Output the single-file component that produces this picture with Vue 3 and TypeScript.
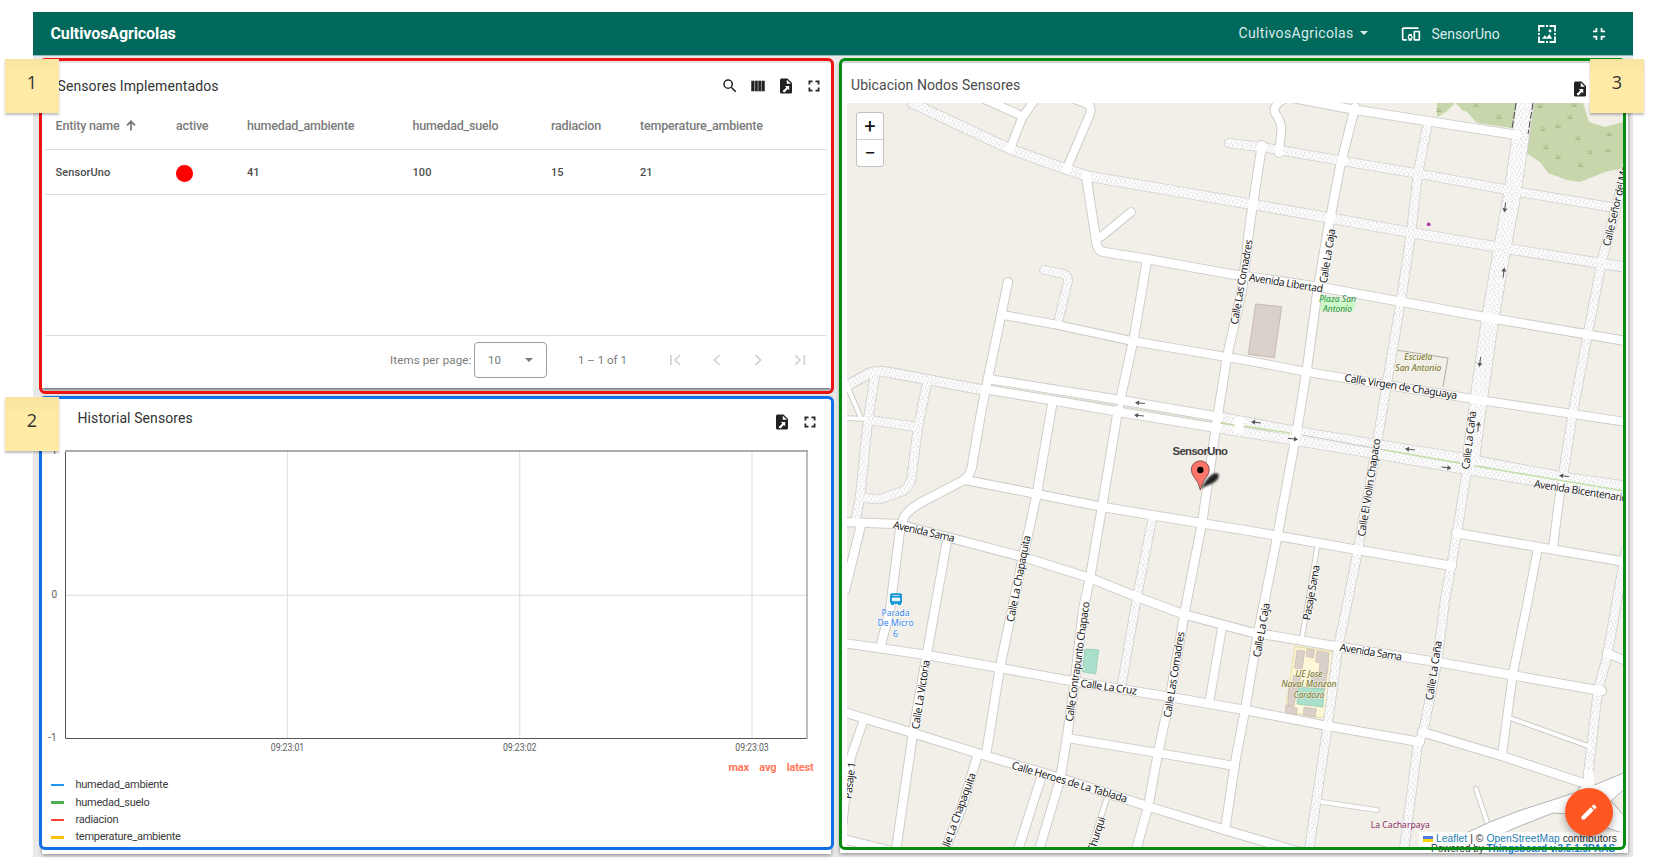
<script setup lang="ts">
interface Road { d: string; w: number; kind?: 'u' }
interface Street { t: string; x: number; y: number; a: number; len?: number; anchor?: string }
interface Place { t: string; x: number; y: number; len: number; kind: string }

const columns = ['Entity name', 'active', 'humedad_ambiente', 'humedad_suelo', 'radiacion', 'temperature_ambiente']
const row = ['SensorUno', '', '41', '100', '15', '21']
const legend = [
  { name: 'humedad_ambiente', color: '#2196f3' },
  { name: 'humedad_suelo', color: '#4caf50' },
  { name: 'radiacion', color: '#f44336' },
  { name: 'temperature_ambiente', color: '#ffc107' },
]
const ticks = [{ x: 287.5, t: '09:23:01' }, { x: 519.7, t: '09:23:02' }, { x: 752, t: '09:23:03' }]

const dirt: Road[] = [
  { d: 'M912 103L963 127L1010 149L1063 168L1087 176L1250 204L1330 218L1413 233L1503 248L1624 267', w: 10, kind: 'u' },
  { d: 'M1044 270L1060 273Q1069 275 1068 281L1058 323', w: 8.5, kind: 'u' },
  { d: 'M1229 143L1267 148L1343 161L1420 174L1520 192L1616 208', w: 9, kind: 'u' },
  { d: 'M1428 122L1418 173L1411 233L1401 300L1387 383L1377 443L1358 550L1348 600L1338 647L1328 723L1309 850', w: 9, kind: 'u' },
  { d: 'M1526 98L1513 190L1502 250L1490 320L1480 390L1470 465', w: 17, kind: 'u' },
  { d: 'M1467 470L1457 533L1445 600L1437 663L1423 733L1418 743L1404 850', w: 9, kind: 'u' },
  { d: 'M1626 172L1618 200L1602 260L1588 333L1572 417L1563 476', w: 9, kind: 'u' },
  { d: 'M1217 416L1230 419L1300 432L1380 445L1463 458L1563 477L1626 486', w: 9.5, kind: 'u' },
  { d: 'M1213 427L1230 430L1293 440L1377 454L1463 469L1626 496', w: 9.5, kind: 'u' },
  { d: 'M842 391L850 384L870 373Q878 371 887 372L983 390', w: 10, kind: 'u' },
  { d: 'M875 375L868 420L860 497L856 519', w: 9, kind: 'u' },
  { d: 'M927 383L918 427L911 480Q910 486 903 491L880 499L862 498', w: 9, kind: 'u' },
  { d: 'M869 420L917 427', w: 9, kind: 'u' },
  { d: 'M1152 520L1137 597L1122 683', w: 8.5, kind: 'u' },
  { d: 'M1626 550L1617 600L1607 657L1598 690L1588 775', w: 9, kind: 'u' },
]
const paved: Road[] = [
  { d: 'M982 98L1022 116', w: 8.5 },
  { d: 'M1036 98L1022 118L1010 149', w: 8.5 },
  { d: 'M1074 99L1088 104Q1092 107 1090 114L1066 170', w: 8.5 },
  { d: 'M1086 175L1096 240Q1097 251 1104 252L1147 259L1230 274L1320 287L1397 301L1490 318L1626 341', w: 9 },
  { d: 'M1098 238L1102 236L1131 212', w: 8.5 },
  { d: 'M1008 282L998 330L987 383L981 413L973 460Q972 474 964 480L922 502Q908 510 904 517L900 530L890 610L880 648', w: 9 },
  { d: 'M1003 315L1053 324L1132 341L1250 361L1307 372L1387 385L1473 399L1573 414L1626 422', w: 8.5 },
  { d: 'M1147 260L1134 337L1118 410L1102 507L1090 578L1083 610L1075 680L1067 737L1060 780L1039 850', w: 9 },
  { d: 'M1262 145L1250 223L1242 290L1227 357L1217 420L1202 523L1186 605L1170 697L1158 753L1148 807L1136 850', w: 9 },
  { d: 'M1355 107L1340 167L1328 230L1318 287L1307 368L1297 430L1277 538L1258 633L1245 710L1235 763L1225 830', w: 9 },
  { d: 'M1288 97L1279 102Q1273 108 1275 113Q1283 124 1281 133L1279 153', w: 8.5 },
  { d: 'M1288 97L1350 109L1427 121L1517 135', w: 9 },
  { d: 'M1563 480L1560 493L1553 547', w: 8.5 },
  { d: 'M1538 548L1527 605L1513 673L1502 755', w: 8.5 },
  { d: 'M988 379L1120 400L1219 417', w: 9 },
  { d: 'M984 389L1063 402L1120 412L1217 428', w: 9 },
  { d: 'M848 388L861 418', w: 4.5 },
  { d: 'M845 418L866 419', w: 4.5 },
  { d: 'M843 522L897 524L947 537L1023 557L1090 578L1137 597L1183 614L1250 632L1340 647L1437 662L1517 676L1602 691', w: 9 },
  { d: 'M861 525L845 590', w: 9 },
  { d: 'M947 541L935 608L920 693L913 733L896 850', w: 9 },
  { d: 'M1052 405L1037 493L1023 557L1012 610L1000 667L986 755', w: 9 },
  { d: 'M977 757L962 807L945 850', w: 9 },
  { d: 'M965 480L1037 494L1103 507L1200 523L1250 531L1358 550L1452 566', w: 9 },
  { d: 'M1456 533L1538 547L1626 562', w: 9 },
  { d: 'M1317 548L1302 638', w: 4.5 },
  { d: 'M1607 653L1626 661', w: 8.5 },
  { d: 'M1510 718L1588 746', w: 4.5 },
  { d: 'M843 643L927 655L1000 668L1077 682L1170 697L1245 710L1328 726L1420 742', w: 9 },
  { d: 'M1422 732L1502 756L1586 784', w: 9 },
  { d: 'M1222 628L1210 698', w: 8.5 },
  { d: 'M1067 738L1158 753L1235 766', w: 8.5 },
  { d: 'M843 712L913 733L980 754L1060 778L1150 807L1225 830L1303 853', w: 9 },
  { d: 'M863 722L851 757L846 790L842 830', w: 8.5 },
  { d: 'M843 839L895 852', w: 9 },
  { d: 'M1042 775L1018 850', w: 9 },
  { d: 'M1107 798L1090 850', w: 5 },
  { d: 'M1322 802L1377 810', w: 4.5 },
  { d: 'M1476 789L1488 825', w: 4.5 },
]
const streets: Street[] = [
  { t: 'Calle Las Comadres', x: 1241.5, y: 282, a: -80, len: 86 },
  { t: 'Calle La Caja', x: 1327.5, y: 256, a: -81, len: 55 },
  { t: 'Avenida Libertad', x: 1286, y: 283, a: 9, len: 75 },
  { t: 'Calle Virgen de Chaguaya', x: 1401, y: 386.5, a: 9, len: 114 },
  { t: 'Calle Señor del Mar', x: 1606.5, y: 246, a: -77, len: 86, anchor: 'start' },
  { t: 'Calle La Caña', x: 1469, y: 440, a: -83, len: 59 },
  { t: 'Calle El Violin Chapaco', x: 1369, y: 487.5, a: -81, len: 99 },
  { t: 'Avenida Bicentenario', x: 1534, y: 483.5, a: 9, len: 95, anchor: 'start' },
  { t: 'Calle La Chapaquita', x: 1018.5, y: 578.5, a: -79, len: 88 },
  { t: 'Avenida Sama', x: 924, y: 531.5, a: 12.5, len: 63 },
  { t: 'Calle Contrapunto Chapaco', x: 1077.5, y: 661.5, a: -82, len: 121 },
  { t: 'Calle La Victoria', x: 920.7, y: 694.5, a: -81, len: 70 },
  { t: 'Calle La Cruz', x: 1108.7, y: 687, a: 8, len: 57 },
  { t: 'Calle Las Comadres', x: 1174, y: 674.5, a: -81, len: 87 },
  { t: 'Calle Heroes de La Tablada', x: 1069.5, y: 782, a: 16.5, len: 120 },
  { t: 'Calle La Chapaquita', x: 972.5, y: 773, a: -70, len: 90, anchor: 'end' },
  { t: 'Calle Churqui', x: 1102, y: 817, a: -72, len: 60, anchor: 'end' },
  { t: 'Pasaje 1', x: 852, y: 762, a: -83, len: 37, anchor: 'end' },
  { t: 'Pasaje Sama', x: 1311.3, y: 592.5, a: -80, len: 56 },
  { t: 'Calle La Caja', x: 1261.5, y: 630, a: -80, len: 55 },
  { t: 'Avenida Sama', x: 1371, y: 652, a: 9, len: 63 },
  { t: 'Calle La Caña', x: 1433.7, y: 670.5, a: -81, len: 60 },
]
const places: Place[] = [
  { t: 'Plaza San', x: 1337.5, y: 301.7, len: 37, kind: 'park' },
  { t: 'Antonio', x: 1337.5, y: 312, len: 29, kind: 'park' },
  { t: 'Escuela', x: 1418.3, y: 360, len: 28, kind: 'school' },
  { t: 'San Antonio', x: 1418.3, y: 370.5, len: 46, kind: 'school' },
  { t: 'UE Jose', x: 1309, y: 676.7, len: 27, kind: 'school' },
  { t: 'Naval Monzon', x: 1309, y: 687.2, len: 55, kind: 'school' },
  { t: 'Cardozo', x: 1309, y: 697.7, len: 31, kind: 'school' },
  { t: 'La Cacharpaya', x: 1400.3, y: 828.3, len: 59, kind: 'venue' },
  { t: 'Parada', x: 895.6, y: 616, len: 28, kind: 'stop' },
  { t: 'De Micro', x: 895.6, y: 626.4, len: 36, kind: 'stop' },
  { t: '6', x: 895.6, y: 636.6, len: 5, kind: 'stop' },
]
const arrows = [
  { x: 1140, y: 403, a: 187 }, { x: 1139, y: 415.5, a: 187 }, { x: 1256, y: 422.3, a: 187 }, { x: 1293, y: 438.8, a: 7 },
  { x: 1410, y: 449.3, a: 187 }, { x: 1446.5, y: 467.7, a: 7 }, { x: 1564, y: 476, a: 187 }, { x: 1505, y: 207.5, a: 97 },
  { x: 1503.7, y: 272.5, a: -83 }, { x: 1480, y: 362, a: 97 }, { x: 1478.3, y: 426.5, a: -83 },
]
const tufts = [
  [1439, 110], [1476, 105], [1499, 117], [1540, 106], [1574, 105], [1570, 117], [1543, 129], [1558, 126],
  [1578, 138], [1609, 134], [1546, 147], [1558, 157], [1590, 152], [1608, 150], [1580.5, 165],
]
const notes = ['1', '2', '3']
</script>

<template>
  <div class="page">
    <header class="bar">
      <h1>CultivosAgricolas</h1>
      <div class="states">CultivosAgricolas<i class="caret"></i></div>
      <div class="entity">
        <svg class="dev" viewBox="0 0 24 24"><path fill="currentColor" d="M3 6h18V4H3c-1.1 0-2 .9-2 2v12c0 1.1.9 2 2 2h4v-2H3V6zm10 6H9v1.78c-.61.55-1 1.33-1 2.22s.39 1.67 1 2.22V20h4v-1.78c.61-.55 1-1.34 1-2.22s-.39-1.67-1-2.22V12zm-2 5.5c-.83 0-1.5-.67-1.5-1.5s.67-1.5 1.5-1.5 1.5.67 1.5 1.5-.67 1.5-1.5 1.5zM22 8h-6c-.5 0-1 .5-1 1v10c0 .5.5 1 1 1h6c.5 0 1-.5 1-1V9c0-.5-.5-1-1-1zm-1 10h-4v-8h4v8z" /></svg>
        <span>SensorUno</span>
      </div>
      <svg class="shot" viewBox="0 0 18 18"><path d="M1 6.500V1H6.500M11.500 1H17V6.500M17 11.500V17H11.500M6.500 17H1V11.500M1 8V10M17 8V10M8 1H10M8 17H10" fill="none" stroke="currentColor" stroke-width="1.8" /><path fill="currentColor" d="M4 13.800L6.800 10.200L8.700 12.500L11.300 9L14.200 13.800Z" /><circle cx="12" cy="6" r="1.400" fill="currentColor" /></svg>
      <svg class="exit" viewBox="5 5 14 14"><path fill="currentColor" d="M5 16h3v3h2v-5H5v2zm3-8H5v2h5V5H8v3zm6 11h2v-3h3v-2h-5v5zm2-11V5h-2v5h5V8h-3z" /></svg>
    </header>

    <main class="board">
      <div class="left">
        <section class="card entities">
          <div class="head">
            <h2>Sensores Implementados</h2>
            <svg class="ic" viewBox="0 0 24 24"><path d="M15.5 14h-.79l-.28-.27A6.47 6.47 0 0 0 16 9.5 6.5 6.5 0 1 0 9.5 16c1.61 0 3.09-.59 4.23-1.57l.27.28v.79l5 4.99L20.49 19l-4.99-5zm-6 0a4.5 4.5 0 1 1 0-9 4.5 4.5 0 0 1 0 9z" /></svg>
            <svg class="ic" viewBox="0 0 24 24"><path d="M3 5h4v14H3zM8.200 5h3.300v14H8.200zM12.600 5h3.300v14h-3.300zM17 5h4v14h-4z" /><path d="M6 5h12v14H6z" opacity=".4" /></svg>
            <svg class="ic" viewBox="0 0 24 24"><path fill-rule="evenodd" d="M6 2h8l6 6v12a2 2 0 0 1-2 2H6a2 2 0 0 1-2-2V4a2 2 0 0 1 2-2zm7 1.500V9h5.500zM10.500 12l1.900 1.900-3 3a1.800 1.800 0 1 0 2 2l3-3 1.900 1.900V12z" /></svg>
            <svg class="ic" viewBox="0 0 24 24"><path d="M7 14H4.700v5.300H10V17H7v-3zM4.700 10H7V7h3V4.700H4.700V10zM17 17h-3v2.300h5.300V14H17v3zM14 4.700V7h3v3h2.300V4.700H14z" /></svg>
          </div>
          <div class="tr th">
            <span v-for="(c, i) in columns" :key="c">{{ c }}<svg v-if="i === 0" class="up" viewBox="0 0 10 11"><path d="M5 10.500V1.500M1 5.300L5 1.300L9 5.300" fill="none" stroke="#757575" stroke-width="1.700" /></svg></span>
          </div>
          <div class="tr td">
            <span v-for="(c, i) in row" :key="i"><b v-if="i === 1" class="dot"></b>{{ c }}</span>
          </div>
          <div class="pager">
            <span class="ipp">Items per page:</span>
            <div class="select"><span>10</span><i class="caret"></i></div>
            <span class="range">1 – 1 of 1</span>
            <svg class="pg" viewBox="0 0 24 24"><path d="M18 6l-6 6 6 6M7 6v12" /></svg>
            <svg class="pg" viewBox="0 0 24 24"><path d="M15 6l-6 6 6 6" /></svg>
            <svg class="pg" viewBox="0 0 24 24"><path d="M9 6l6 6-6 6" /></svg>
            <svg class="pg" viewBox="0 0 24 24"><path d="M6 6l6 6-6 6M17 6v12" /></svg>
          </div>
        </section>

        <section class="card history">
          <div class="head">
            <h2>Historial Sensores</h2>
            <svg class="ic" viewBox="0 0 24 24"><path fill-rule="evenodd" d="M6 2h8l6 6v12a2 2 0 0 1-2 2H6a2 2 0 0 1-2-2V4a2 2 0 0 1 2-2zm7 1.500V9h5.500zM10.500 12l1.900 1.900-3 3a1.800 1.800 0 1 0 2 2l3-3 1.900 1.900V12z" /></svg>
            <svg class="ic" viewBox="0 0 24 24"><path d="M7 14H4.700v5.300H10V17H7v-3zM4.700 10H7V7h3V4.700H4.700V10zM17 17h-3v2.300h5.300V14H17v3zM14 4.700V7h3v3h2.300V4.700H14z" /></svg>
          </div>
          <svg class="chart" viewBox="42 440 789 320">
            <g stroke="#e3e3e3" stroke-width="1.200">
              <path v-for="k in ticks" :key="k.x" :d="`M${k.x} 451V738`" />
              <path d="M66 595.300H807" />
            </g>
            <path d="M65.500 451V738.500H807" fill="none" stroke="#545454" />
            <path d="M65 451H808" stroke="#adadad" stroke-width="2" />
            <path d="M807 451V739" stroke="#999" stroke-width="1.300" />
            <g class="axis">
              <text x="57.200" y="454" text-anchor="end">1</text>
              <text x="57.200" y="597.500" text-anchor="end">0</text>
              <text x="56.700" y="741" text-anchor="end">-1</text>
              <text v-for="k in ticks" :key="k.t" :x="k.x" y="750.800" text-anchor="middle" textLength="33.500" lengthAdjust="spacingAndGlyphs">{{ k.t }}</text>
            </g>
          </svg>
          <div class="stats"><span>max</span><span>avg</span><span>latest</span></div>
          <ul class="legend">
            <li v-for="l in legend" :key="l.name"><i :style="{ background: l.color }"></i>{{ l.name }}</li>
          </ul>
        </section>
      </div>

      <section class="card mapcard">
        <div class="head">
          <h2>Ubicacion Nodos Sensores</h2>
          <svg class="ic" viewBox="0 0 24 24"><path fill-rule="evenodd" d="M6 2h8l6 6v12a2 2 0 0 1-2 2H6a2 2 0 0 1-2-2V4a2 2 0 0 1 2-2zm7 1.500V9h5.500zM10.500 12l1.900 1.900-3 3a1.800 1.800 0 1 0 2 2l3-3 1.900 1.900V12z" /></svg>
        </div>
        <div class="map">
          <svg class="tiles" viewBox="847 103 776 744">
            <defs>
              <pattern id="gravel" width="9" height="7" patternUnits="userSpaceOnUse">
                <rect width="9" height="7" fill="#fbfbfb" />
                <path d="M1 1h1M4 0h1M7 2h1M2.500 3.500h1M5.500 4h1M0 5h1M8 6h1M4 6h1" stroke="#d2d2d2" stroke-width="1" />
              </pattern>
              <filter id="soft" x="-50%" y="-50%" width="200%" height="200%"><feGaussianBlur stdDeviation="1.100" /></filter>
            </defs>
            <rect x="847" y="103" width="776" height="744" fill="#f2efe9" />
            <g fill="#c8d7ab">
              <path d="M1437 103H1455L1446 112L1437 117Z" />
              <path d="M1456 103L1462 110L1467 112L1477 123L1512 128L1516 103Z" />
              <path d="M1533 103H1583L1589 122L1605 127L1623 122V168L1605 172L1580 182L1567 180L1548 173L1540 162L1526 153Z" />
            </g>
            <g stroke="#a9bd88" stroke-width="1" fill="none">
              <path v-for="(p, i) in tufts" :key="i" :d="`M${p[0] - 3} ${p[1] + 1.500}h6M${p[0]} ${p[1] + 1.500}v-4M${p[0] - 2.500} ${p[1] - 1.500}l2.500 3l2.500 -3`" />
            </g>
            <path d="M1255.700 304L1281.700 306.700L1274.300 357.700L1248.300 354.300Z" fill="#d9d0c9" stroke="#c8bab0" />
            <path d="M1322 296L1356 302L1354 311L1320 310Z" fill="#cdf7c9" />
            <path d="M1396 350L1448 358L1443 387" fill="none" stroke="#b3aca5" />
            <path d="M1085 649L1098.700 650L1095.700 674L1082.500 671.700Z" fill="#aae0cb" stroke="#92ccb4" stroke-width=".8" />
            <path d="M1295 646.500L1333.500 652L1326 710Q1325 718 1319 717.500L1285.500 711.500Z" fill="#fdf7d7" stroke="#e6dc9b" />
            <g fill="#d9d0c9" stroke="#c8bab0" stroke-width=".7">
              <path d="M1297 650L1305 651L1302 669L1294.500 668Z" /><path d="M1307 649L1314.500 650L1313.500 658L1306.500 656.500Z" />
              <path d="M1317 651L1329 653L1327.500 674L1319 673L1320 663L1315.500 662Z" />
              <path d="M1293.500 675L1301 676L1298 687L1292 686Z" /><path d="M1312 674L1327 675L1325 690L1310 686Z" />
              <path d="M1289 687L1297 688L1294 706L1288 705Z" /><path d="M1286 705L1297 708L1296.500 715L1285.500 712Z" />
              <path d="M1304 707L1316.500 709L1315 717L1303.500 715Z" />
            </g>
            <path d="M1298 687L1324 689L1323 707L1297 704Z" fill="#aae0cb" stroke="#92ccb4" stroke-width=".8" />
            <g fill="none" stroke-linecap="round" stroke-linejoin="round">
              <path v-for="(r, i) in dirt" :key="'a' + i" :d="r.d" :stroke-width="r.w + 1.200" stroke="#d4d2ce" />
              <path v-for="(r, i) in paved" :key="'b' + i" :d="r.d" :stroke-width="r.w + 1.200" stroke="#cbc9c5" />
              <path v-for="(r, i) in dirt" :key="'c' + i" :d="r.d" :stroke-width="r.w - .6" stroke="url(#gravel)" />
              <path v-for="(r, i) in paved" :key="'d' + i" :d="r.d" :stroke-width="r.w - .6" stroke="#fff" />
              <path d="M1516 103L1512 129M1533 103L1528 134" stroke="#444" stroke-dasharray="7 2" stroke-linecap="butt" />
              <path d="M992 385L1118 405M1126 408L1212 421" stroke="#cfccc6" stroke-width="2" stroke-linecap="butt" />
              <path d="M993 385.200L1117 404.800M1127 408.200L1211 420.800" stroke="#f2efe9" stroke-width=".8" stroke-linecap="butt" />
              <path d="M1221 423L1234 425M1244 426L1290 433M1385 450L1459 463M1475 466L1624 491" stroke="#c5dfa8" stroke-width="1.500" />
              <path d="M1302 435L1385 450" stroke="#c9c9c4" />
              <path d="M1239 417V433" stroke="#fff" stroke-width="9" stroke-linecap="butt" />
            </g>
            <path d="M1466 833L1490 822L1517 811.500L1577 792Q1586 787 1584 770H1593L1594.500 785L1626 772V790L1611 801L1626 818V834L1600 825L1570 814L1553 813L1515 828L1500 838Z" fill="#fff" />
            <path d="M1466 833L1490 822L1517 811.500L1577 792L1580 786M1594.500 785L1626 772M1626 788L1611 801L1626 818M1626 834L1607 828M1500 835L1515 828L1553 813L1570 814" fill="none" stroke="#aaa" stroke-width=".9" />
            <g v-for="(a, i) in arrows" :key="i" :transform="`translate(${a.x} ${a.y}) rotate(${a.a})`"><path d="M-5 0H3" stroke="#555" stroke-width="1" /><path d="M5 0L1 -2.500V2.500Z" fill="#555" /></g>
            <circle cx="1428.700" cy="224.300" r="1.900" fill="#ab39a5" />
            <g class="street">
              <text v-for="(s, i) in streets" :key="i" :transform="`translate(${s.x} ${s.y}) rotate(${s.a})`" y="3.700" :text-anchor="s.anchor || 'middle'" :textLength="s.len">{{ s.t }}</text>
            </g>
            <g class="place">
              <text v-for="p in places" :key="p.t" :class="p.kind" :x="p.x" :y="p.y" text-anchor="middle" :textLength="p.len" lengthAdjust="spacingAndGlyphs">{{ p.t }}</text>
            </g>
            <rect x="890" y="593.300" width="12" height="10.500" rx="1.800" fill="#1397d8" />
            <path d="M892.500 595.500h7M892.300 598h7.400v2.800h-7.400z" fill="#fff" stroke="#fff" stroke-width=".7" />
            <path d="M891 603h3v2h-3zM898 603h3v2h-3z" fill="#1397d8" />
            <path d="M1201 489Q1205 481 1209 477Q1214 472 1218 473.500Q1220 477 1216 481Q1210 485 1206 486Z" fill="#222" filter="url(#soft)" />
            <path d="M1200.300 490Q1199 483 1194.500 477.500Q1191.300 474 1191.300 469.500A9 8.700 0 0 1 1209.300 469.500Q1209.300 474 1206 477.500Q1201.500 483 1200.300 490Z" fill="#fe7569" stroke="#5b2a26" stroke-width=".7" />
            <circle cx="1200.300" cy="470" r="3.200" fill="#000" />
            <text class="pin" x="1200.200" y="454.500" text-anchor="middle" textLength="55.500">SensorUno</text>
          </svg>
          <div class="zoom"><span>+</span><span>−</span></div>
          <div class="attr"><i class="flag"></i><a>Leaflet</a> | © <a>OpenStreetMap</a> contributors</div>
        </div>
      </section>
    </main>

    <div class="powered">Powered by <b>Thingsboard v.3.5.1.3PAAS</b></div>
    <div class="frame red"></div>
    <div class="frame blue"></div>
    <div class="frame green"></div>
    <div class="fab"><svg viewBox="0 0 24 24"><path fill="#fff" d="M3 17.250V21h3.750L17.810 9.940l-3.750-3.750L3 17.250zM20.710 7.040a1 1 0 0 0 0-1.410l-2.340-2.340a1 1 0 0 0-1.410 0l-1.830 1.830 3.750 3.750 1.830-1.830z" /></svg></div>
    <div v-for="n in notes" :key="n" class="note" :class="'n' + n">{{ n }}</div>
  </div>
</template>

<style>
body { margin: 0; background: #fff; }
</style>
<style scoped>
.page { position: relative; width: 1653px; height: 867px; overflow: hidden; box-sizing: border-box; padding: 12px 20px 10px 33px; font-family: Roboto, sans-serif; color: #333; display: flex; flex-direction: column; }
h1, h2, ul { margin: 0; padding: 0; list-style: none; }
.bar { height: 44px; flex: none; background: #00695c; color: #fff; display: flex; align-items: center; border-bottom: 1px solid #8fbab4; box-sizing: border-box; }
.bar h1 { font-size: 16px; font-weight: 700; margin-left: 17.500px; width: 1188px; letter-spacing: -.1px; flex: none; }
.states { width: 162px; font-size: 14px; letter-spacing: .37px; color: #dcebe9; display: flex; align-items: center; padding-bottom: 1px; flex: none; }
.caret { display: inline-block; border: 4px solid transparent; border-top: 4px solid currentColor; border-bottom: 0; margin-left: 6px; }
.entity { display: flex; align-items: center; width: 137px; color: #dcebe9; font-size: 14px; padding-top: 1px; flex: none; }
.dev { width: 20px; height: 20px; margin-right: 11px; color: #fff; }
.shot { width: 18px; height: 18px; }
.exit { width: 12px; height: 12px; margin-left: 37px; }
.board { flex: 1; background: #e9e9e9; display: grid; grid-template-columns: 789px 788px; column-gap: 9px; padding: 7px 5px 4px 8.500px; box-sizing: border-box; min-height: 0; }
.left { display: grid; grid-template-rows: 325px 457px; row-gap: 9px; min-height: 0; }
.card { background: #fff; box-shadow: 0 1px 4px rgba(0, 0, 0, .45); display: flex; flex-direction: column; min-height: 0; min-width: 0; }
.entities { box-shadow: 0 2px 3px rgba(0, 0, 0, .5); }
.head { display: flex; align-items: center; flex: none; gap: 10px; }
.head h2 { flex: 1; font-size: 14px; font-weight: 400; letter-spacing: .1px; color: #333; }
.ic { width: 18px; height: 18px; fill: #222; }
.entities .head { height: 32px; padding: 7px 8px 0 16px; }
.tr { display: grid; grid-template-columns: 120.500px 71px 165.500px 138.500px 89px 1fr; margin: 0 4px 0 3.500px; padding-left: 10.500px; align-items: center; border-bottom: 1px solid #dedede; box-sizing: border-box; flex: none; }
.th { height: 48px; font-size: 12.500px; font-weight: 500; color: #7b7b7b; letter-spacing: -.18px; }
.td { height: 45px; font-size: 11px; font-weight: 500; color: #4c4c4c; letter-spacing: .1px; }
.up { width: 10px; height: 11px; margin-left: 6px; vertical-align: -1px; }
.dot { display: block; width: 16.500px; height: 16.500px; border-radius: 50%; background: #f00; margin-top: 3px; }
.pager { margin: auto 4px 0 3.500px; border-top: 1px solid #dedede; height: 53px; box-sizing: border-box; display: flex; align-items: center; padding-bottom: 4px; font-size: 11.500px; color: #7a7a7a; flex: none; }
.pager > * { flex: none; white-space: nowrap; }
.ipp { margin-left: 345px; width: 84px; letter-spacing: .15px; }
.select { width: 73px; height: 36px; border: 1px solid #9e9e9e; border-radius: 4px; box-sizing: border-box; display: flex; align-items: center; justify-content: space-between; padding: 0 13px; }
.select .caret { margin: 0; border-width: 4.500px; border-bottom: 0; }
.range { margin-left: 31px; width: 87px; }
.pg { width: 20px; height: 20px; margin-right: 21.700px; fill: none; stroke: #d0d0d0; stroke-width: 2; }
.pg:last-child { margin-right: 0; }
.history .head { height: 43px; padding: 0 11.500px 0 36px; }
.history h2 { padding-bottom: 1px; }
.history .ic { margin-top: 7px; }
.chart { width: 789px; height: 320px; flex: none; }
.axis { font: 10px Roboto, sans-serif; fill: #606060; }
.stats { display: flex; justify-content: flex-end; gap: 10.500px; padding-right: 17px; height: 16px; line-height: 16px; font-size: 11px; font-weight: 700; color: #ff7a5a; letter-spacing: -.2px; }
.legend { padding-left: 9.500px; }
.legend li { height: 17.400px; display: flex; align-items: center; font-size: 11px; color: #3a3a3a; letter-spacing: -.27px; }
.legend i { width: 13px; height: 2.500px; margin-right: 11.500px; margin-top: 1px; }
.mapcard .head { height: 40px; padding: 0 39px 0 11.500px; }
.mapcard h2 { color: #4a4a4a; padding-top: 4px; letter-spacing: .07px; }
.mapcard .ic { margin-top: 11px; }
.map { position: relative; width: 776px; height: 744px; margin-left: 7.500px; overflow: hidden; flex: none; }
.tiles { display: block; width: 776px; height: 744px; }
.street { font: 10.700px "Noto Sans", sans-serif; fill: #222; stroke: #fff; stroke-width: 1.600px; paint-order: stroke; }
.place { font: 9.500px "Noto Sans", sans-serif; }
.park { fill: #2b9440; font-style: italic; }
.school { fill: #6e6c25; font-style: italic; stroke: #f8f4e4; stroke-width: 1px; paint-order: stroke; }
.venue { fill: #8b2a68; }
.stop { fill: #3585ee; stroke: #fff; stroke-width: 1px; paint-order: stroke; }
.pin { font: bold 11.300px "Liberation Sans", sans-serif; fill: #3d3d3d; }
.zoom { position: absolute; left: 9px; top: 9px; width: 26px; border: 1.500px solid #c4c1bc; border-radius: 3px; background: #fff; }
.zoom span { display: block; height: 26px; text-align: center; font: 400 20px/27px Roboto, sans-serif; color: #111; }
.zoom span + span { border-top: 1px solid #ccc; }
.attr { position: absolute; right: 0; bottom: 0; width: 204px; height: 15px; line-height: 14px; box-sizing: border-box; padding-left: 4px; background: rgba(255, 255, 255, .8); font-family: "Liberation Sans", Arial, sans-serif; font-size: 10.300px; color: #333; white-space: nowrap; letter-spacing: .05px; }
.attr a { color: #2a7fb8; }
.flag { display: inline-block; width: 10px; height: 6px; margin-right: 3px; background: linear-gradient(#4c7be1 50%, #ffd500 50%); }
.powered { position: absolute; left: 1431px; top: 842px; font: 10px/14px "Liberation Sans", Arial, sans-serif; color: #333; white-space: nowrap; }
.powered b { color: #1c76c4; }
.frame { position: absolute; box-sizing: border-box; border: 3px solid; border-radius: 6px; }
.red { left: 39px; top: 58px; width: 795px; height: 336px; border-color: #ec1313; }
.blue { left: 39px; top: 396px; width: 795px; height: 454px; border-color: #0f70e8; }
.green { left: 839px; top: 58px; width: 787px; height: 792px; border-color: #048c10; }
.fab { position: absolute; left: 1565px; top: 788px; width: 48px; height: 48px; border-radius: 50%; background: #ff5722; box-shadow: 0 3px 8px rgba(0, 0, 0, .35); display: flex; align-items: center; justify-content: center; }
.fab svg { width: 20px; height: 20px; }
.note { position: absolute; width: 54px; height: 54px; box-sizing: border-box; background: linear-gradient(#f9e3a0 0, #ffeaa6 32%); box-shadow: 0 2px 2px rgba(0, 0, 0, .25); font: 18px/46px "Open Sans", sans-serif; color: #333; text-align: center; }
.n1 { left: 5px; top: 59px; }
.n2 { left: 5px; top: 397px; }
.n3 { left: 1590px; top: 59px; }
</style>
